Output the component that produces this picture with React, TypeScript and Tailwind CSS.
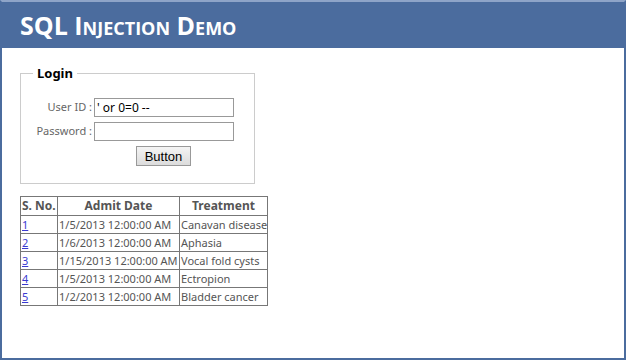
import React from "react";

const rows = [
  ["1", "1/5/2013 12:00:00 AM", "Canavan disease"],
  ["2", "1/6/2013 12:00:00 AM", "Aphasia"],
  ["3", "1/15/2013 12:00:00 AM", "Vocal fold cysts"],
  ["4", "1/5/2013 12:00:00 AM", "Ectropion"],
  ["5", "1/2/2013 12:00:00 AM", "Bladder cancer"],
];

export default function App() {
  return (
    <div className="w-[626px] h-[360px] bg-white border-l-2 border-r-2 border-b-2 border-t-2 border-[#4b6c9e] border-t-[#8ea4c8] flex flex-col overflow-hidden" style={{ fontFamily: '"Noto Sans", "Open Sans", sans-serif' }}>
      <div className="h-[46px] bg-[#4b6c9e] flex items-center pl-[18px] shrink-0">
        <h1 className="text-white font-bold text-[25px] leading-none [font-variant:small-caps]" style={{ fontFamily: '"Open Sans", sans-serif' }}>
          SQL Injection Demo
        </h1>
      </div>
      <div className="pl-[18px] pt-[18px]">
        <fieldset className="w-[235px] h-[118px] border border-[#cccccc] px-[10px] pb-[10px]">
          <legend className="px-[4px] ml-[2px] text-[13px] font-bold text-black leading-[14px]">Login</legend>
          <div className="flex flex-col items-start mt-[18px] gap-[5px] text-[11px] text-[#666]">
            <div className="flex items-center">
              <span className="w-[61px] text-right mr-[2px]">User ID :</span>
              <input readOnly value="' or 0=0 --" className="w-[140px] h-[19px] border border-[#999] px-[2px] text-[12px] text-black outline-none" />
            </div>
            <div className="flex items-center">
              <span className="w-[61px] text-right mr-[2px]">Password :</span>
              <input readOnly value="" className="w-[140px] h-[19px] border border-[#999] px-[2px] text-[12px] text-black outline-none" />
            </div>
            <div className="pl-[105px]">
              <button className="w-[55px] h-[20px] border border-[#999] bg-gradient-to-b from-[#f4f4f4] to-[#dcdcdc] text-[13px] text-black leading-none" style={{ fontFamily: '"Liberation Sans", sans-serif' }}>
                Button
              </button>
            </div>
          </div>
        </fieldset>
        <table className="mt-[12px] border-collapse border border-[#777] text-[11px] text-[#555] table-fixed w-[247px]">
          <colgroup>
            <col className="w-[37px]" />
            <col className="w-[122px]" />
            <col className="w-[88px]" />
          </colgroup>
          <thead>
            <tr className="h-[18px]">
              <th className="border border-[#777] px-[1px] text-left font-bold text-[12px]">S. No.</th>
              <th className="border border-[#777] font-bold text-[12px]">Admit Date</th>
              <th className="border border-[#777] font-bold text-[12px]">Treatment</th>
            </tr>
          </thead>
          <tbody>
            {rows.map((r) => (
              <tr key={r[0]} className="h-[18px]">
                <td className="border border-[#777] px-[1px] leading-[16px]">
                  <a href="#" className="text-[#3a3ad0] underline">{r[0]}</a>
                </td>
                <td className="border border-[#777] px-[1px] whitespace-nowrap leading-[16px]">{r[1]}</td>
                <td className="border border-[#777] px-[1px] whitespace-nowrap overflow-hidden leading-[16px]">{r[2]}</td>
              </tr>
            ))}
          </tbody>
        </table>
      </div>
    </div>
  );
}
